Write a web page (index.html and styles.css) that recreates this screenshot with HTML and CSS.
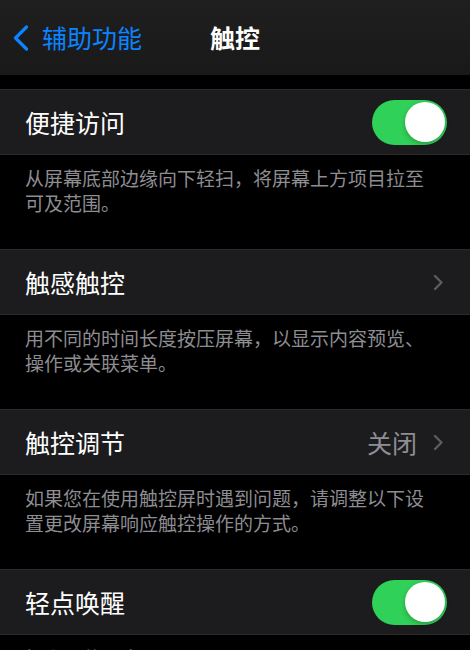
FILE: index.html
```html
<!DOCTYPE html>
<html lang="zh-CN">
<head>
    <meta charset="UTF-8">
    <meta name="viewport" content="width=device-width, initial-scale=1.0">
    <title>触控</title>
    <link rel="stylesheet" href="styles.css">
</head>
<body>
    <header class="navbar">
        <a href="#" class="back">
            <svg class="back-icon" width="16" height="26" viewBox="0 0 16 26">
                <path d="M13.5 2 L2.5 13 L13.5 24" fill="none" stroke="#0a84ff" stroke-width="3.2" stroke-linecap="round" stroke-linejoin="round"/>
            </svg>
            <span>辅助功能</span>
        </a>
        <h1 class="title">触控</h1>
        <div></div>
    </header>

    <div class="spacer"></div>

    <section class="group">
        <div class="row">
            <span class="label">便捷访问</span>
            <div class="toggle on"><div class="knob"></div></div>
        </div>
    </section>
    <p class="footnote">从屏幕底部边缘向下轻扫，将屏幕上方项目拉至可及范围。</p>

    <section class="group">
        <a href="#" class="row">
            <span class="label">触感触控</span>
            <span class="accessory">
                <svg class="chevron" width="11" height="17" viewBox="0 0 11 17">
                    <path d="M2 2 L8.5 8.5 L2 15" fill="none" stroke="#5c5c60" stroke-width="2.4" stroke-linecap="round" stroke-linejoin="round"/>
                </svg>
            </span>
        </a>
    </section>
    <p class="footnote">用不同的时间长度按压屏幕，以显示内容预览、操作或关联菜单。</p>

    <section class="group">
        <a href="#" class="row">
            <span class="label">触控调节</span>
            <span class="accessory">
                <span class="value">关闭</span>
                <svg class="chevron" width="11" height="17" viewBox="0 0 11 17">
                    <path d="M2 2 L8.5 8.5 L2 15" fill="none" stroke="#5c5c60" stroke-width="2.4" stroke-linecap="round" stroke-linejoin="round"/>
                </svg>
            </span>
        </a>
    </section>
    <p class="footnote">如果您在使用触控屏时遇到问题，请调整以下设置更改屏幕响应触控操作的方式。</p>

    <section class="group">
        <div class="row">
            <span class="label">轻点唤醒</span>
            <div class="toggle on"><div class="knob"></div></div>
        </div>
    </section>
    <p class="footnote">轻点屏幕以唤醒显示屏。</p>
</body>
</html>
```

FILE: styles.css
```css
:root {
    --bg: #000;
    --bg-cell: #1c1c1e;
    --bg-nav: #1c1c1c;
    --line: #2a2a2c;
    --text: #fff;
    --text-secondary: #8d8d92;
    --blue: #0a84ff;
    --green: #30d158;
}

body {
    margin: 0;
    background: var(--bg);
    color: var(--text);
    font-family: "Noto Sans CJK SC", "Noto Sans", sans-serif;
    overflow: hidden;
}

a {
    color: inherit;
    text-decoration: none;
}

.navbar {
    height: 75px;
    background: linear-gradient(to bottom, #1f1f1f, #191919);
    display: grid;
    grid-template-columns: 1fr auto 1fr;
    align-items: center;
}

.back {
    display: flex;
    align-items: center;
    gap: 13px;
    padding-left: 13px;
    color: var(--blue);
    font-size: 25px;
    line-height: 1;
}

.back-icon {
    display: block;
}

.title {
    margin: 0;
    font-size: 25px;
    font-weight: 600;
    line-height: 1;
}

.spacer {
    height: 14px;
}

.group {
    background: var(--bg-cell);
    border-top: 1px solid var(--line);
    border-bottom: 1px solid var(--line);
}

.row {
    height: 64px;
    display: flex;
    align-items: center;
    justify-content: space-between;
    padding: 0 23px 0 25px;
}

.label {
    font-size: 25px;
    line-height: 1;
}

.accessory {
    display: flex;
    align-items: center;
    gap: 16px;
    padding-right: 3px;
}

.value {
    font-size: 25px;
    line-height: 1;
    color: #8e8e93;
}

.chevron {
    display: block;
}

.toggle {
    width: 75px;
    height: 45px;
    border-radius: 23px;
    background: #39393d;
    position: relative;
}

.toggle.on {
    background: var(--green);
}

.knob {
    position: absolute;
    top: 2.5px;
    left: 2.5px;
    width: 40px;
    height: 40px;
    border-radius: 50%;
    background: #fff;
    box-shadow: 0 2px 5px rgba(0,0,0,0.25);
}

.toggle.on .knob {
    left: auto;
    right: 2.5px;
}

.footnote {
    margin: 0;
    padding: 10px 40px 34px 25px;
    font-size: 19px;
    line-height: 25px;
    color: var(--text-secondary);
}
```
